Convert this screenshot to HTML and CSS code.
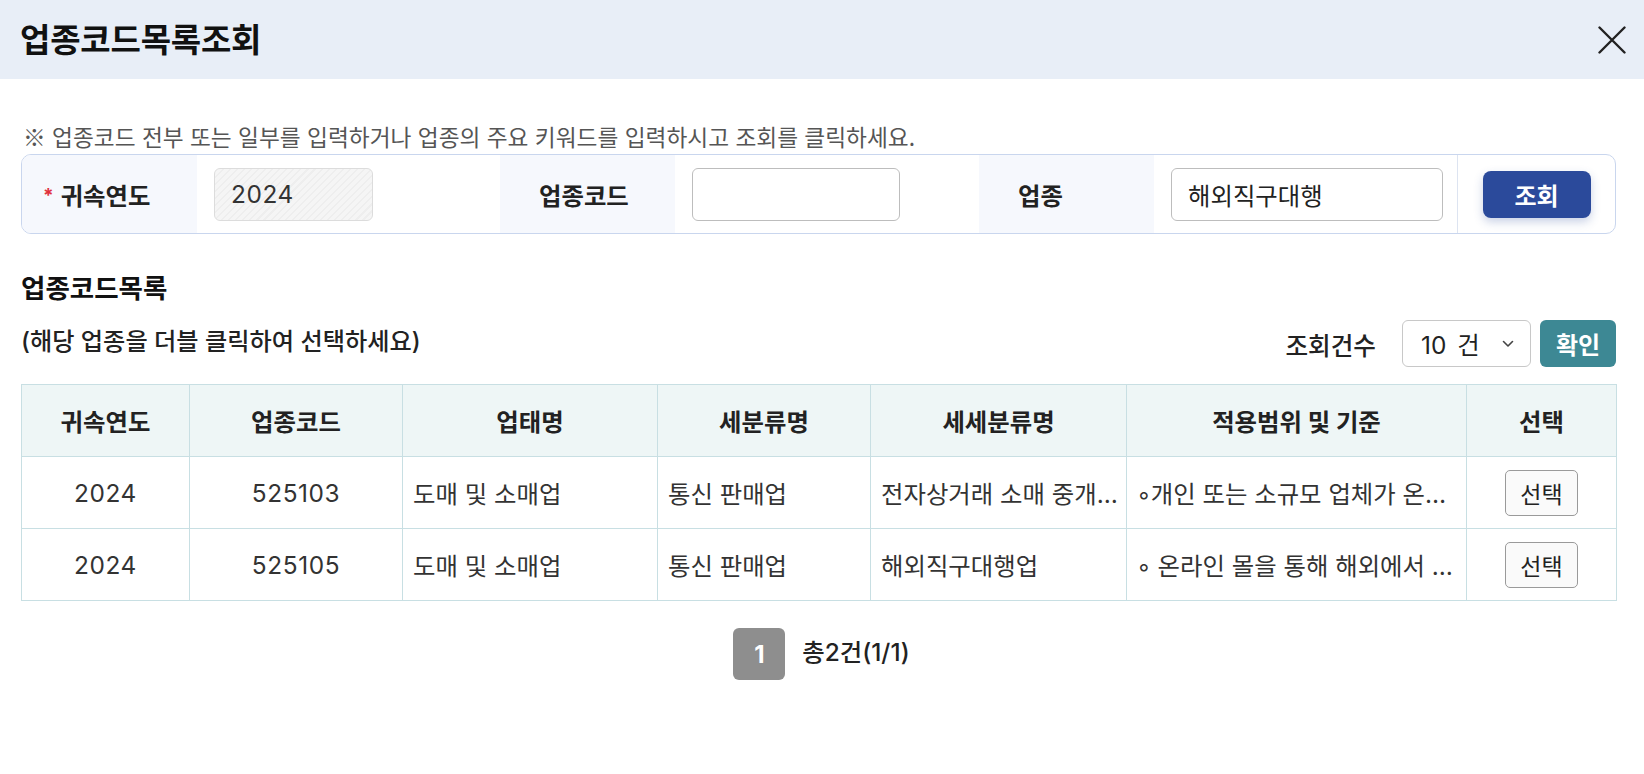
FILE: index.html
```html
<!DOCTYPE html>
<html lang="ko">
<head>
<meta charset="utf-8">
<title>업종코드목록조회</title>
<link rel="stylesheet" href="styles.css">
</head>
<body>
<div class="popup">
  <div class="popup-header">
    <h1 class="popup-title">업종코드목록조회</h1>
    <button class="close-btn" aria-label="닫기">
      <svg width="28" height="28" viewBox="0 0 28 28"><path d="M1.5 1.5 L26.5 26.5 M26.5 1.5 L1.5 26.5" stroke="#222" stroke-width="2.4" stroke-linecap="round" fill="none"/></svg>
    </button>
  </div>
  <div class="popup-body">
    <p class="notice">※ 업종코드 전부 또는 일부를 입력하거나 업종의 주요 키워드를 입력하시고 조회를 클릭하세요.</p>
    <div class="search-box">
      <div class="s-label s-label-req"><span class="req">*</span>귀속연도</div>
      <div class="s-field"><div class="inp inp-readonly inp-year">2024</div></div>
      <div class="s-label">업종코드</div>
      <div class="s-field"><div class="inp inp-code"></div></div>
      <div class="s-label">업종</div>
      <div class="s-field"><div class="inp inp-name">해외직구대행</div></div>
      <div class="s-action"><button class="btn-search">조회</button></div>
    </div>

    <h2 class="section-title">업종코드목록</h2>
    <div class="list-bar">
      <div class="list-hint">(해당 업종을 더블 클릭하여 선택하세요)</div>
      <div class="list-ctrl">
        <span class="ctrl-label">조회건수</span>
        <div class="select">
          <span class="select-val">10 건</span>
          <svg width="12" height="8" viewBox="0 0 12 8"><path d="M1.5 1.5 L6 6 L10.5 1.5" stroke="#444" stroke-width="1.6" fill="none" stroke-linecap="round" stroke-linejoin="round"/></svg>
        </div>
        <button class="btn-ok">확인</button>
      </div>
    </div>

    <table class="grid">
      <colgroup>
        <col class="c1"><col class="c2"><col class="c3"><col class="c4"><col class="c5"><col class="c6"><col class="c7">
      </colgroup>
      <thead>
        <tr>
          <th>귀속연도</th><th>업종코드</th><th>업태명</th><th>세분류명</th><th>세세분류명</th><th>적용범위 및 기준</th><th>선택</th>
        </tr>
      </thead>
      <tbody>
        <tr>
          <td class="ctr num">2024</td>
          <td class="ctr num">525103</td>
          <td>도매 및 소매업</td>
          <td>통신 판매업</td>
          <td class="tight"><div class="ell">전자상거래 소매 중개업(오픈마켓)</div></td>
          <td><div class="ell">◦개인 또는 소규모 업체가 온라인</div></td>
          <td class="ctr"><button class="btn-pick">선택</button></td>
        </tr>
        <tr>
          <td class="ctr num">2024</td>
          <td class="ctr num">525105</td>
          <td>도매 및 소매업</td>
          <td>통신 판매업</td>
          <td class="tight"><div class="ell">해외직구대행업</div></td>
          <td><div class="ell">◦ 온라인 몰을 통해 해외에서 구매</div></td>
          <td class="ctr"><button class="btn-pick">선택</button></td>
        </tr>
      </tbody>
    </table>

    <div class="paging">
      <span class="page-num">1</span>
      <span class="page-total">총2건(1/1)</span>
    </div>
  </div>
</div>
</body>
</html>
```
FILE: styles.css
```css
* { box-sizing: border-box; }
html, body { margin: 0; padding: 0; background: #fff; }
body {
  font-family: Inter, "Noto Sans CJK KR", sans-serif;
  color: #222;
}
button { font-family: inherit; cursor: pointer; }

.popup-header {
  height: 79px;
  background: #e8eef7;
  display: flex;
  align-items: center;
  justify-content: space-between;
  padding: 0 18px 0 20px;
}
.popup-title {
  margin: -3px 0 0;
  font-size: 33px;
  font-weight: 700;
  color: #111;
  letter-spacing: -0.2px;
}
.close-btn {
  border: 0;
  background: none;
  padding: 0;
  width: 28px;
  height: 28px;
  display: flex;
}

.popup-body { padding: 0 28px 0 21px; }

.notice {
  margin: 46px 0 0 2px;
  font-family: "Noto Sans CJK KR", sans-serif;
  font-size: 22.7px;
  line-height: 24px;
  color: #555;
}

.search-box {
  margin-top: 5px;
  height: 80px;
  border: 1px solid #c9d6ee;
  border-radius: 10px;
  overflow: hidden;
  display: grid;
  grid-template-columns: 175px 303px 175px 304px 175px 303px 1fr;
}
.s-label {
  background: #f6f8fd;
  display: flex;
  align-items: center;
  padding-left: 39px;
  font-size: 24.4px;
  font-weight: 700;
  color: #222;
}
.s-label-req { padding-left: 21px; }
.req {
  color: #e0303c;
  font-size: 19px;
  margin-right: 7px;
  margin-top: 3px;
}
.s-field {
  display: flex;
  align-items: center;
  padding-left: 17px;
}
.inp {
  height: 53px;
  border: 1px solid #bdbdbd;
  border-radius: 6px;
  background: #fff;
  display: flex;
  align-items: center;
  padding-left: 16px;
  font-size: 24.4px;
  color: #222;
}
.inp-year { width: 159px; }
.inp-code { width: 208px; }
.inp-name { width: 272px; }
.inp-readonly {
  border-color: #dcdcdc;
  color: #333;
  background: repeating-linear-gradient(135deg, #eeeeee 0 1.5px, #f5f5f5 1.5px 5px);
  letter-spacing: 0.6px;
}
.s-action {
  border-left: 1px solid #dde4f1;
  display: flex;
  align-items: center;
  justify-content: center;
}
.btn-search {
  width: 108px;
  height: 47px;
  border: 0;
  border-radius: 8px;
  background: #2b4a9b;
  color: #fff;
  font-size: 24px;
  font-weight: 700;
  box-shadow: 0 4px 10px rgba(43, 74, 155, 0.25);
}

.section-title {
  margin: 39px 0 0;
  font-size: 26.5px;
  line-height: 30px;
  font-weight: 700;
  color: #111;
}
.list-bar {
  margin-top: 17px;
  height: 47px;
  display: flex;
  align-items: center;
  justify-content: space-between;
}
.list-hint {
  font-size: 24.2px;
  font-weight: 500;
  color: #222;
  margin-top: -8px;
}
.list-ctrl {
  display: flex;
  align-items: center;
  height: 47px;
}
.ctrl-label {
  font-size: 24.6px;
  font-weight: 500;
  margin-right: 26px;
}
.select {
  width: 129px;
  height: 47px;
  border: 1px solid #c8c8c8;
  border-radius: 6px;
  display: flex;
  align-items: center;
  justify-content: space-between;
  padding: 0 16px 0 18px;
  font-size: 24.4px;
}
.select-val { word-spacing: 4px; }
.btn-ok {
  margin-left: 9px;
  width: 76px;
  height: 47px;
  border: 0;
  border-radius: 6px;
  background: #3d8894;
  color: #fff;
  font-size: 24px;
  font-weight: 700;
}

.grid {
  margin-top: 17px;
  width: 100%;
  border-collapse: collapse;
  table-layout: fixed;
  border: 1px solid #c3dbe0;
}
.c1 { width: 168px; }
.c2 { width: 213px; }
.c3 { width: 255px; }
.c4 { width: 213px; }
.c5 { width: 256px; }
.c6 { width: 340px; }
.c7 { width: 150px; }
.grid th, .grid td {
  border: 1px solid #c8dfe3;
  height: 72px;
  font-size: 24.4px;
}
.grid th {
  background: #eef6f6;
  font-weight: 700;
  color: #222;
  text-align: center;
}
.grid td {
  padding: 0 12px 0 10px;
  color: #333;
  white-space: nowrap;
}
.grid td.tight { padding-right: 6px; }
.grid td.ctr { text-align: center; padding: 0; }
.grid td.num { letter-spacing: 0.6px; }
.ell {
  overflow: hidden;
  text-overflow: ellipsis;
  white-space: nowrap;
}
.btn-pick {
  width: 73px;
  height: 46px;
  border: 1px solid #9a9a9a;
  border-radius: 5px;
  background: #fafafa;
  font-size: 23px;
  color: #222;
  padding: 0;
}

.paging {
  margin-top: 27px;
  display: flex;
  justify-content: center;
  align-items: center;
  gap: 17px;
  padding-left: 6px;
}
.page-num {
  width: 52px;
  height: 52px;
  border-radius: 6px;
  background: #8e8e8e;
  color: #fff;
  font-size: 24px;
  font-weight: 700;
  display: flex;
  align-items: center;
  justify-content: center;
}
.page-total {
  font-size: 24.4px;
  font-weight: 500;
  color: #222;
  margin-top: -8px;
}
```
